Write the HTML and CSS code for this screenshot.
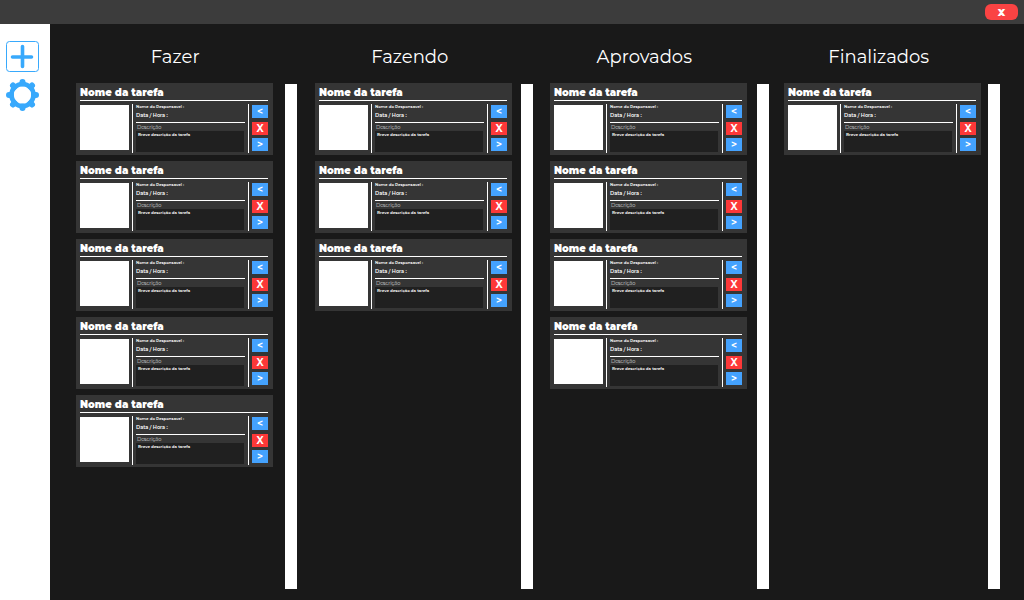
FILE: index.html
```html
<!DOCTYPE html>
<html lang="pt-BR">
<head>
<meta charset="utf-8">
<title>Quadro de tarefas</title>
<link rel="stylesheet" href="styles.css">
<script src="board.js" defer></script>
</head>
<body>
<header class="topbar"><button class="close" type="button">x</button></header>
<div class="layout">
  <nav class="sidebar">
    <button class="tool" type="button" aria-label="Nova tarefa">
      <svg viewBox="0 0 33 31" width="33" height="31"><rect x="0.5" y="0.5" width="32" height="30" rx="3" fill="none" stroke="#38a9fc"/><path d="M16.5 5.500V25.500M6.500 16H25.500" fill="none" stroke="#38a9fc" stroke-width="3.600" stroke-linecap="round"/></svg>
    </button>
    <button class="tool" type="button" aria-label="Configurações">
      <svg viewBox="0 0 33 32" width="33" height="32"><g fill="none" stroke="#38a9fc"><circle cx="16.500" cy="16" r="11" stroke-width="4.600"/><path d="M16.500 4.500V3M16.500 27.500V29M5 16H3M28 16H30M8.400 7.900L7 6.500M24.600 7.900L26 6.500M8.400 24.100L7 25.500M24.600 24.100L26 25.500" stroke-width="6" stroke-linecap="round"/></g></svg>
    </button>
  </nav>
  <main class="board">
    <div class="headings">
      <h2>Fazer</h2><h2>Fazendo</h2><h2>Aprovados</h2><h2>Finalizados</h2>
    </div>
    <div class="columns">
      <section class="column" data-count="5" aria-label="Fazer"><div class="cards"></div><div class="bar"></div></section>
      <section class="column" data-count="3" aria-label="Fazendo"><div class="cards"></div><div class="bar"></div></section>
      <section class="column" data-count="4" aria-label="Aprovados"><div class="cards"></div><div class="bar"></div></section>
      <section class="column" data-count="1" aria-label="Finalizados"><div class="cards"></div><div class="bar"></div></section>
    </div>
  </main>
</div>
<template id="task">
  <article class="card">
    <h3 class="title">Nome da tarefa</h3>
    <div class="body">
      <div class="photo"></div>
      <div class="info">
        <p class="owner">Nome do Responsavel :</p>
        <p class="date">Data / Hora :</p>
        <p class="label">Descrição</p>
        <p class="description">Breve descrição da tarefa</p>
      </div>
      <div class="actions">
        <button class="action" type="button">&lt;</button>
        <button class="action remove" type="button">X</button>
        <button class="action" type="button">&gt;</button>
      </div>
    </div>
  </article>
</template>
</body>
</html>
```
FILE: styles.css
```css
* { box-sizing: border-box; }
body {
  margin: 0;
  min-height: 100vh;
  display: flex;
  flex-direction: column;
  background: #191919;
  color: #fff;
  font-family: Montserrat, Inter, sans-serif;
}
h2, h3, p { margin: 0; }
button { font-family: inherit; padding: 0; border: 0; color: #fff; cursor: pointer; }
.topbar {
  height: 24px;
  padding-right: 6px;
  display: flex;
  align-items: center;
  justify-content: flex-end;
  background: #3c3c3c;
}
.close {
  width: 33px;
  height: 16px;
  border-radius: 6px;
  background: #fa4343;
  font-size: 12px;
  line-height: 14px;
  font-weight: 800;
}
.layout { flex: 1; display: flex; }
.sidebar {
  width: 50px;
  padding: 17px 5px 0 0;
  display: flex;
  flex-direction: column;
  align-items: center;
  gap: 7px;
  background: #fff;
}
.tool { background: none; }
.tool svg { display: block; }
.board { flex: 1; display: flex; flex-direction: column; padding-bottom: 11px; }
.headings {
  display: grid;
  grid-template-columns: repeat(4, 1fr);
  padding: 21px 28px 0 8px;
}
.headings h2 {
  font-size: 18px;
  line-height: 24px;
  font-weight: 400;
  text-align: center;
}
.columns {
  flex: 1;
  display: grid;
  grid-template-columns: 239fr 235fr 234fr 216fr;
  padding: 14px 24px 0 26px;
}
.column { display: flex; justify-content: space-between; padding-right: 18px; }
.column:nth-child(2) { padding-right: 17px; }
.column:nth-child(3) { padding-right: 15px; }
.column:last-child { padding-right: 0; }
.cards { width: 197px; display: flex; flex-direction: column; gap: 6px; }
.bar { width: 12px; margin-top: 1px; background: #fff; }
.card { padding: 4px 5px 2px 4px; background: #353535; }
.title {
  height: 14px;
  font-size: 10px;
  line-height: 12px;
  font-weight: 900;
  border-bottom: 1px solid #fff;
  white-space: nowrap;
}
.body { display: flex; margin-top: 3px; height: 49px; }
.photo { width: 49px; height: 45px; margin: 1px 3px 0 0; background: #fff; }
.info {
  flex: 1;
  padding: 0 3px 1px;
  border-left: 1px solid #fff;
  border-right: 1px solid #fff;
  display: flex;
  flex-direction: column;
  white-space: nowrap;
}
.owner { font-size: 4px; line-height: 6px; font-weight: 600; }
.date {
  font-size: 5px;
  line-height: 10px;
  height: 13px;
  font-weight: 600;
  border-bottom: 1px solid #fff;
}
.label { font-size: 5px; line-height: 8px; padding-left: 1px; font-weight: 300; }
.description {
  flex: 1;
  margin-right: 1px;
  padding-left: 2px;
  background: #202020;
  font-size: 4px;
  line-height: 7px;
  font-weight: 600;
}
.actions {
  width: 19px;
  padding: 1px 0 2px 3px;
  display: flex;
  flex-direction: column;
  justify-content: space-between;
}
.action {
  height: 13px;
  background: #44a2fe;
  font-size: 10px;
  line-height: 13px;
  font-weight: 700;
}
.remove { background: #fd3838; }
```
FILE: board.js
```js
const task = document.getElementById("task");
document.querySelectorAll(".column").forEach((column) => {
  const cards = column.querySelector(".cards");
  for (let i = 0; i < Number(column.dataset.count); i++) {
    cards.append(task.content.cloneNode(true));
  }
});
```
